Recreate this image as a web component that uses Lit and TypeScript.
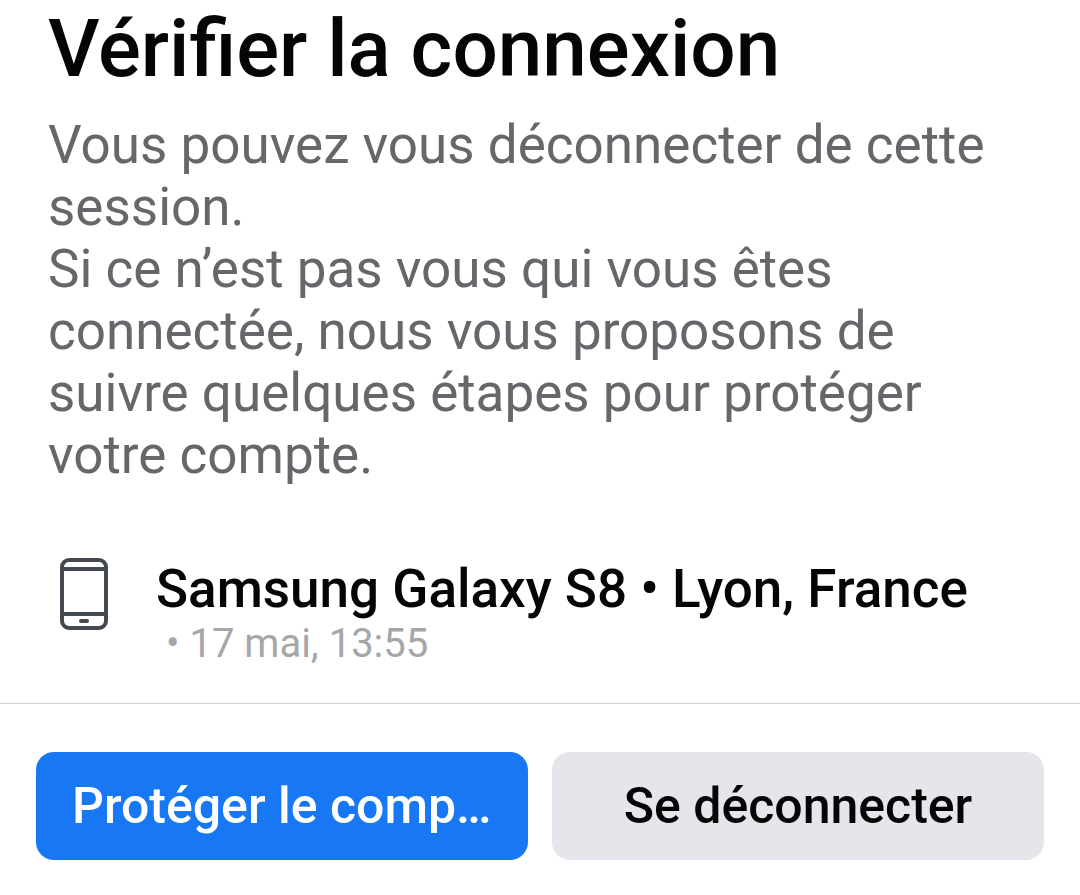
import { LitElement, html, css } from "lit";
import { customElement } from "lit/decorators.js";

@customElement("app-root")
export class AppRoot extends LitElement {
  static styles = css`
    :host {
      display: block;
      min-height: 100vh;
      background: #fff;
      color: #050505;
      font-family: Roboto, "Liberation Sans", sans-serif;
    }
    * { box-sizing: border-box; }
    .intro { padding: 4px 48px 0; }
    h1 { margin: 0; font-size: 80px; line-height: 90px; font-weight: 500; }
    .lead { margin: 20px 0 0; font-size: 53px; line-height: 62px; color: #65676b; }
    .session {
      display: flex;
      align-items: flex-start;
      gap: 48px;
      padding: 72px 48px 35px 60px;
    }
    .device { flex: none; width: 48px; height: 72px; }
    .name { margin: 0; font-size: 53px; line-height: 62px; font-weight: 500; }
    .when { margin: 0; padding-left: 10px; font-size: 40px; line-height: 48px; color: #a4a6aa; }
    .actions {
      display: grid;
      grid-template-columns: 1fr 1fr;
      gap: 24px;
      padding: 48px 36px 35px;
      border-top: 1px solid #ced0d4;
    }
    button {
      min-width: 0;
      height: 108px;
      padding: 0 36px;
      border: 0;
      border-radius: 18px;
      background: #e4e6eb;
      color: #050505;
      font: 500 50px/62px Roboto, "Liberation Sans", sans-serif;
      white-space: nowrap;
      overflow: hidden;
      text-overflow: ellipsis;
    }
    .primary { background: #1877f2; color: #fff; }
  `;

  render() {
    return html`
      <main>
        <section class="intro">
          <h1>Vérifier la connexion</h1>
          <p class="lead">
            Vous pouvez vous déconnecter de cette session.<br />Si ce n’est pas vous qui vous êtes
            connectée, nous vous proposons de suivre quelques étapes pour protéger votre compte.
          </p>
        </section>
        <section class="session">
          <svg class="device" viewBox="0 0 48 72" fill="none" stroke="#444950" stroke-width="4" aria-hidden="true">
            <rect x="2" y="2" width="44" height="68" rx="7" />
            <path d="M2 11h44M2 56h44" />
            <path d="M21 63h6" stroke-linecap="round" />
          </svg>
          <div>
            <h2 class="name">Samsung Galaxy S8 • Lyon, France</h2>
            <p class="when">• 17 mai, 13:55</p>
          </div>
        </section>
        <footer class="actions">
          <button class="primary" type="button">Protéger le compte</button>
          <button type="button">Se déconnecter</button>
        </footer>
      </main>
    `;
  }
}
